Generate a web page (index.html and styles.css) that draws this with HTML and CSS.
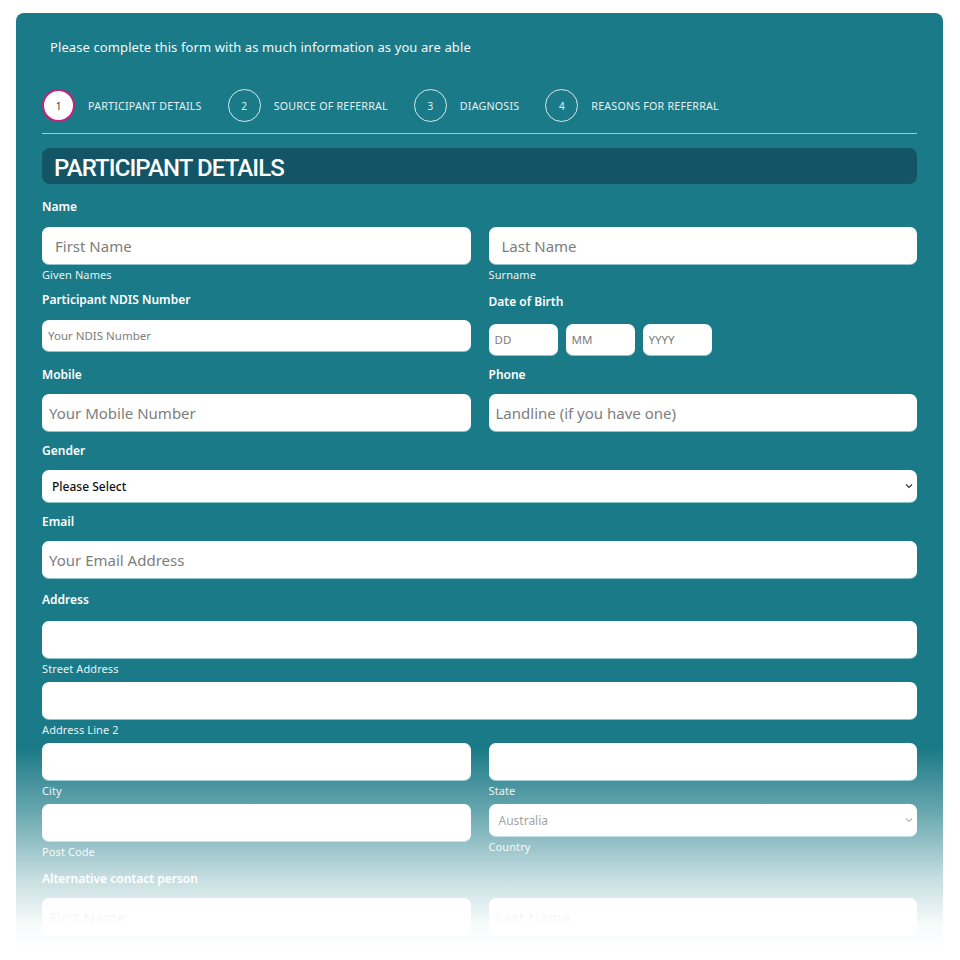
FILE: index.html
```html
<!DOCTYPE html>
<html>
<head>
<meta charset="utf-8">
<link rel="stylesheet" href="styles.css">
</head>
<body>
<div class="panel">
  <p class="intro">Please complete this form with as much information as you are able</p>
  <div class="steps">
    <div class="step active"><span class="num">1</span><span class="step-label">PARTICIPANT DETAILS</span></div>
    <div class="step"><span class="num">2</span><span class="step-label">SOURCE OF REFERRAL</span></div>
    <div class="step"><span class="num">3</span><span class="step-label">DIAGNOSIS</span></div>
    <div class="step"><span class="num">4</span><span class="step-label">REASONS FOR REFERRAL</span></div>
  </div>
  <h1 class="section-title">PARTICIPANT DETAILS</h1>

  <div class="label l-name">Name</div>
  <div class="row two">
    <div class="field"><input class="input big pad" placeholder="First Name"><div class="sub">Given Names</div></div>
    <div class="field"><input class="input big pad" placeholder="Last Name"><div class="sub">Surname</div></div>
  </div>

  <div class="row two top-gap">
    <div class="field">
      <div class="label">Participant NDIS Number</div>
      <input class="input small" placeholder="Your NDIS Number">
    </div>
    <div class="field">
      <div class="label dob-label">Date of Birth</div>
      <div class="dob">
        <input class="input small dob-box" placeholder="DD">
        <input class="input small dob-box" placeholder="MM">
        <input class="input small dob-box" placeholder="YYYY">
      </div>
    </div>
  </div>

  <div class="row two">
    <div class="field">
      <div class="label l-mobile">Mobile</div>
      <input class="input big" placeholder="Your Mobile Number">
    </div>
    <div class="field">
      <div class="label l-mobile">Phone</div>
      <input class="input big" placeholder="Landline (if you have one)">
    </div>
  </div>

  <div class="label l-gender">Gender</div>
  <div class="select gender"><span>Please Select</span>
    <svg class="chev" width="8" height="6" viewBox="0 0 8 6"><path d="M1 1.5 L4 4.5 L7 1.5" fill="none" stroke="#333" stroke-width="1.2"/></svg>
  </div>

  <div class="label l-email">Email</div>
  <input class="input big full" placeholder="Your Email Address">

  <div class="label l-address">Address</div>
  <input class="input big full">
  <div class="sub">Street Address</div>
  <input class="input big full line2">
  <div class="sub">Address Line 2</div>
  <div class="row two">
    <div class="field"><input class="input big city"><div class="sub">City</div></div>
    <div class="field"><input class="input big city"><div class="sub">State</div></div>
  </div>
  <div class="row two">
    <div class="field"><input class="input big city"><div class="sub">Post Code</div></div>
    <div class="field">
      <div class="select country city"><span>Australia</span>
        <svg class="chev" width="8" height="6" viewBox="0 0 8 6"><path d="M1 1.5 L4 4.5 L7 1.5" fill="none" stroke="#888" stroke-width="1.2"/></svg>
      </div>
      <div class="sub">Country</div>
    </div>
  </div>
  <div class="label l-alt">Alternative contact person</div>
  <div class="row two">
    <input class="input big" placeholder="First Name">
    <input class="input big" placeholder="Last Name">
  </div>
  <div class="fade"></div>
</div>
</body>
</html>
```

FILE: styles.css
```css
* { box-sizing: border-box; }
html, body { margin: 0; padding: 0; background: #fff; }
body {
  font-family: "Noto Sans", "Open Sans", sans-serif;
  color: #fff;
  height: 960px;
  overflow: hidden;
}
.panel {
  position: relative;
  margin: 13px 17px 0 16px;
  background: #1b7a87;
  border-radius: 8px 8px 0 0;
  padding: 26px 26px 60px 26px;
}
.intro {
  margin: 0 0 0 8px;
  font-size: 13px;
  line-height: 16px;
  color: #f2f7f8;
  letter-spacing: 0.1px;
}
.steps {
  display: flex;
  align-items: center;
  margin-top: 34px;
  padding-bottom: 11px;
  border-bottom: 1px solid #a6cdd3;
}
.step {
  display: flex;
  align-items: center;
  margin-right: 26px;
}
.num {
  width: 33px;
  height: 33px;
  border-radius: 50%;
  border: 1.5px solid #d7e8eb;
  display: flex;
  align-items: center;
  justify-content: center;
  font-size: 10px;
  color: #e6f1f3;
}
.step.active .num {
  background: #fff;
  border: 2px solid #c2227f;
  color: #333;
}
.step-label {
  margin-left: 13px;
  font-size: 10.7px;
  letter-spacing: 0.2px;
  color: #e6f1f3;
}
.section-title {
  margin: 14px 0 0 0;
  height: 36px;
  background: #135566;
  border-radius: 8px;
  font-family: "Roboto", sans-serif;
  font-weight: 500;
  font-size: 24px;
  line-height: 40px;
  padding-left: 12px;
  letter-spacing: -0.9px;
  color: #fff;
}
.label {
  font-size: 12px;
  font-weight: 600;
  line-height: 16px;
  color: #fff;
}
.l-name { margin-top: 15px; margin-bottom: 12px; }
.row.two {
  display: grid;
  grid-template-columns: 1fr 1fr;
  column-gap: 18px;
}
.field { display: flex; flex-direction: column; }
.input {
  display: block;
  width: 100%;
  border: none;
  background: #fff;
  border-radius: 7px;
  font-family: "Noto Sans", "Open Sans", sans-serif;
  outline: none;
  color: #333;
  box-shadow: 0 1px 0 #8fc5d0;
}
.input::placeholder { color: #7d7d7d; }
.input.big {
  height: 37px;
  font-size: 15px;
  padding: 0 7px;
}
.input.big.pad { padding-left: 13px; }
.input.small {
  height: 31px;
  font-size: 11.5px;
  padding: 0 6px;
}
.sub {
  font-size: 11px;
  line-height: 14px;
  margin-top: 4px;
  color: #e8f2f4;
  letter-spacing: 0.1px;
}
.top-gap { margin-top: 10px; }
.top-gap .label { margin-bottom: 12px; }
.top-gap .dob-label { margin-top: 2px; margin-bottom: 14px; }
.dob { display: flex; gap: 8px; }
.dob-box { width: 69px !important; }
.l-mobile { margin-top: 12px; margin-bottom: 11px; }
.l-gender { margin-top: 12px; margin-bottom: 11px; }
.select {
  position: relative;
  display: flex;
  align-items: center;
  background: #fff;
  border-radius: 7px;
  height: 32px;
  padding: 0 10px;
  font-size: 12px;
  box-shadow: 0 1px 0 #8fc5d0;
}
.gender span { color: #111; font-weight: 500; }
.chev { position: absolute; right: 4px; top: 13px; }
.l-email { margin-top: 12px; margin-bottom: 11px; }
.l-address { margin-top: 14px; margin-bottom: 13px; }
.line2 { margin-top: 6px; }
.city { margin-top: 6px; }
.country { height: 32px; }
.country span { color: #666; font-size: 12px; }
.l-alt { margin-top: 12px; margin-bottom: 11px; }
.fade {
  position: absolute;
  left: -20px;
  right: -20px;
  top: 735px;
  height: 260px;
  background: linear-gradient(to bottom, rgba(255,255,255,0) 0%, rgba(255,255,255,0.35) 25%, rgba(255,255,255,0.75) 50%, rgba(255,255,255,0.97) 68%, #fff 78%);
  pointer-events: none;
}
```
